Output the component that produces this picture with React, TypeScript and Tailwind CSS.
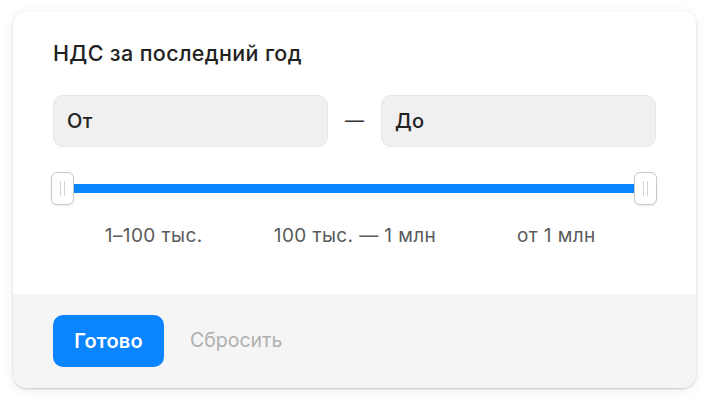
import { useState } from 'react';

const ranges = ['1–100 тыс.', '100 тыс. — 1 млн', 'от 1 млн'];

const Thumb = () => (
  <div className="relative z-10 flex h-[33px] w-[23px] shrink-0 items-center justify-center gap-[3px] rounded-[6px] border border-[#c9c9c9] bg-white shadow-[0_1px_2px_rgba(0,0,0,0.08)]">
    <span className="h-[15px] w-px bg-[#d4d4d4]" />
    <span className="h-[15px] w-px bg-[#d4d4d4]" />
  </div>
);

export default function App() {
  const [from, setFrom] = useState('');
  const [to, setTo] = useState('');

  return (
    <div
      className="min-h-[405px] w-[709px] bg-white pl-[13px] pt-[11px]"
      style={{ fontFamily: 'Inter, "Noto Sans", sans-serif' }}
    >
      <div className="flex h-[377px] w-[683px] flex-col overflow-hidden rounded-[14px] bg-white shadow-[0_1px_2px_rgba(0,0,0,0.18),0_2px_12px_rgba(0,0,0,0.08)]">
        <div className="flex h-[283px] flex-col px-10 pt-[29px]">
          <h2 className="h-[26px] text-[21.5px] font-medium leading-[26px] tracking-[0.35px] text-[#222]">
            НДС за последний год
          </h2>

          <div className="mt-[29px] flex h-[52px] items-center">
            <input
              value={from}
              onChange={(e) => setFrom(e.target.value)}
              placeholder="От"
              className="h-full w-[275px] rounded-[10px] border border-[#e6e6e6] bg-[#f0f0f0] px-[13px] text-[20px] font-medium tracking-[0.3px] text-[#222] outline-none placeholder:text-[#222]"
            />
            <span className="flex w-[53px] justify-center text-[19px] text-[#333]">—</span>
            <input
              value={to}
              onChange={(e) => setTo(e.target.value)}
              placeholder="До"
              className="h-full w-[275px] rounded-[10px] border border-[#e6e6e6] bg-[#f0f0f0] px-[13px] text-[20px] font-medium tracking-[0.3px] text-[#222] outline-none placeholder:text-[#222]"
            />
          </div>

          <div className="mt-[25px] ml-[-2px] flex h-[33px] w-[606px] items-center">
            <Thumb />
            <div className="h-[9px] flex-1 bg-[#0a84ff]" />
            <Thumb />
          </div>

          <div className="mt-[19px] grid w-[604px] grid-cols-3 text-center text-[19px] leading-[24px] tracking-[0.4px] text-[#5a5a5a]">
            {ranges.map((r) => (
              <span key={r}>{r}</span>
            ))}
          </div>
        </div>

        <div className="flex flex-1 items-center gap-[26px] bg-[#f5f5f5] px-10">
          <button className="h-[52px] w-[111px] rounded-[10px] bg-[#0a84ff] text-[20px] font-semibold tracking-[0.2px] text-white">
            Готово
          </button>
          <button className="text-[19.5px] text-[#b0b0b0]">Сбросить</button>
        </div>
      </div>
    </div>
  );
}
